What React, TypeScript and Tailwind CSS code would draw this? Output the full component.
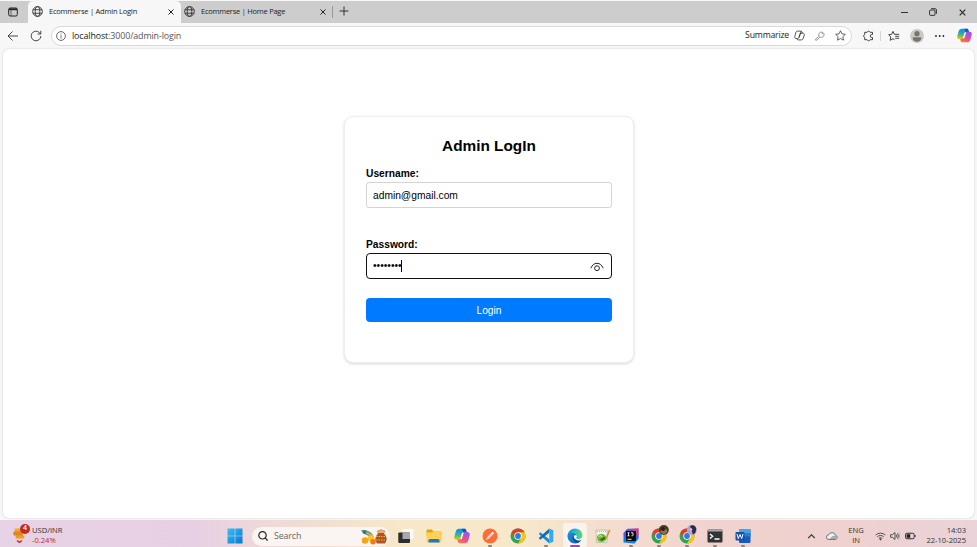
import React from "react";

const ui = "font-['Open_Sans','Noto_Sans',sans-serif]";

function Globe() {
  return (
    <svg viewBox="0 0 12 12" className="h-[11px] w-[11px] shrink-0" fill="none" stroke="#333" strokeWidth="1">
      <circle cx="6" cy="6" r="5.3" />
      <ellipse cx="6" cy="6" rx="2.5" ry="5.3" />
      <path d="M1.2 4.1h9.6M1.2 7.9h9.6" />
    </svg>
  );
}

function Cross({ className }: { className: string }) {
  return (
    <svg viewBox="0 0 8 8" className={className} fill="none" stroke="#222" strokeWidth="1">
      <path d="M1.500 1.500l5 5M6.500 1.500l-5 5" />
    </svg>
  );
}

function CopilotMark({ className }: { className: string }) {
  return (
    <svg viewBox="0 0 16 16" className={className}>
      <defs>
        <linearGradient id="cpA" x1="0.4" y1="0" x2="0.3" y2="1">
          <stop offset="0" stopColor="#168ce5" />
          <stop offset="0.35" stopColor="#17a6c9" />
          <stop offset="0.65" stopColor="#63bb60" />
          <stop offset="1" stopColor="#f5c514" />
        </linearGradient>
        <linearGradient id="cpB" x1="0.7" y1="0" x2="0.2" y2="1">
          <stop offset="0" stopColor="#8e57ef" />
          <stop offset="0.5" stopColor="#e54b9d" />
          <stop offset="1" stopColor="#fb7748" />
        </linearGradient>
      </defs>
      <path d="M5 .8h5.300c1 0 1.500.5 1.800 1.400l.6 2.200H10.400c-1 0-1.500.5-1.800 1.500L7.200 10c-.4 1.400-.9 2-2 2H2.800C.6 12-.2 10.400.5 8l1.200-4.200C2.300 1.800 3.300.8 5 .8z" fill="url(#cpA)" />
      <path d="M8 .8h2.300c1 0 1.500.5 1.800 1.400l.6 2.200H9.200z" fill="#1753c8" />
      <path d="M11 15.200H5.700c-1 0-1.500-.5-1.800-1.400l-.6-2.200h2.300c1 0 1.500-.5 1.800-1.500L8.800 6c.4-1.400.9-2 2-2h2.400c2.200 0 3 1.600 2.300 4l-1.200 4.200c-.6 2-1.600 3-3.300 3z" fill="url(#cpB)" />
      <path d="M6.300 10.600L8 5Q8.500 4 9.700 4.700L8 10.400q-.5 1.200-1.700.2z" fill="#fff" />
    </svg>
  );
}

function TabStrip() {
  return (
    <div className="flex h-[22px] items-stretch bg-[#cdcdcd]">
      <div className="flex w-[28px] items-center pb-px pl-[8px]">
        <svg viewBox="0 0 10 10" className="h-[10px] w-[10px]" fill="none" stroke="#222">
          <rect x="0.700" y="1" width="8.600" height="8" rx="1.400" />
          <path d="M1 2.300h8" strokeWidth="1.800" />
          <path d="M3 3v6" strokeWidth="0.600" />
        </svg>
      </div>
      <div className="flex w-[153px] items-center rounded-t-[5px] bg-[#f7f7f7] pb-px pl-[4px]">
        <Globe />
        <span className="ml-[6px] w-[118px] whitespace-nowrap text-[7.500px] tracking-[-0.220px] text-[#222]">Ecommerse | Admin LogIn</span>
        <Cross className="h-[8px] w-[8px]" />
      </div>
      <div className="flex w-[151px] items-center pb-px pl-[3px]">
        <Globe />
        <span className="ml-[6px] w-[118px] whitespace-nowrap text-[7.500px] tracking-[-0.250px] text-[#222]">Ecommerse | Home Page</span>
        <Cross className="h-[8px] w-[8px]" />
      </div>
      <div className="my-[5px] w-px bg-[#999]" />
      <svg viewBox="0 0 10 10" className="mt-[5px] ml-[6px] h-[10px] w-[10px]" fill="none" stroke="#333" strokeWidth="1">
        <path d="M5 .5v9M.5 5h9" />
      </svg>
      <div className="ml-auto flex w-[76px] items-center justify-between pr-[10px]">
        <div className="h-px w-[7px] bg-[#333]" />
        <svg viewBox="0 0 8 8" className="h-[8px] w-[8px]" fill="none" stroke="#333" strokeWidth="1">
          <rect x="0.600" y="2" width="5.400" height="5.400" rx="1" />
          <path d="M2.200 .7h4c.8 0 1.200.5 1.200 1.200v3.900" />
        </svg>
        <Cross className="h-[9px] w-[9px]" />
      </div>
    </div>
  );
}

function Toolbar() {
  return (
    <div className="flex h-[25px] items-center bg-[#f7f7f7]">
      <svg viewBox="0 0 12 12" className="ml-[7px] h-[12px] w-[12px]" fill="none" stroke="#333" strokeWidth="0.900">
        <path d="M11 6H1M5.500 1.500L1 6l4.500 4.500" />
      </svg>
      <svg viewBox="0 0 12 12" className="ml-[11px] h-[12px] w-[12px]" fill="none" stroke="#333" strokeWidth="0.900">
        <path d="M10.800 6a4.800 4.800 0 1 1-1.300-3.300L10.700 4M10.800.8V4H7.600" />
      </svg>
      <div className="ml-[9px] flex h-[20px] w-[801px] items-center rounded-full border border-[#d9d9d9] bg-white pl-[4px]">
        <svg viewBox="0 0 10 10" className="h-[10px] w-[10px]" fill="none" stroke="#444" strokeWidth="0.800">
          <circle cx="5" cy="5" r="4.400" />
          <path d="M5 4.400v3M5 2.500v1" />
        </svg>
        <span className="ml-[6px] text-[8.900px] tracking-[-0.120px] text-[#555]"><span className="text-[#222]">localhost</span>:3000/admin-login</span>
        <span className="ml-auto pt-px text-[8.700px] tracking-[-0.200px] text-[#222]">Summarize</span>
        <svg viewBox="0 0 12 12" className="ml-[5px] h-[11px] w-[11px]" fill="none" stroke="#333" strokeWidth="0.900" strokeLinejoin="round">
          <path d="M3.900 1.200h3.500c.8 0 1.100.4 1.300 1l.4 1.300H7.600c-.8 0-1.100.4-1.300 1.200L5.300 8c-.3 1-.7 1.300-1.400 1.300H2.200C1 9.300.5 8.300.9 7l1-3.800c.4-1.400.9-2 2-2z" />
          <path d="M8.100 10.800H4.600c-.8 0-1.100-.4-1.300-1l-.2-.5M9.100 3.500h.7c1.200 0 1.700 1 1.300 2.200l-1 3.100c-.4 1.400-.9 2-2 2M7.800 1.300L5.700 8.200" />
        </svg>
        <svg viewBox="0 0 12 12" className="ml-[10px] h-[10px] w-[10px]" fill="none" stroke="#777" strokeWidth="0.900">
          <path d="M5 6.200A3.200 3.200 0 1 1 6.600 7.500H5.700L2.300 11H.7V9.800z" />
          <circle cx="8.700" cy="3.200" r=".4" />
        </svg>
        <svg viewBox="0 0 12 12" className="mr-[5px] ml-[10px] h-[11px] w-[11px]" fill="none" stroke="#444" strokeWidth="0.900" strokeLinejoin="round">
          <path d="M6 .8l1.600 3.400 3.700.5-2.700 2.600.7 3.800L6 9.300l-3.300 1.800.7-3.800L.7 4.700l3.700-.5z" />
        </svg>
      </div>
      <svg viewBox="0 0 12 12" className="ml-[10px] h-[12px] w-[12px]" fill="none" stroke="#333" strokeWidth="0.900" strokeLinejoin="round">
        <path d="M10.500 4.500V2.300H8.100a1.600 1.600 0 0 0-3 0H2.700v2.200a1.600 1.600 0 0 0 0 3v2.200h2.400a1.600 1.600 0 0 0 3 0h2.400V7.500H9.800a1.500 1.500 0 0 1 0-3z" />
      </svg>
      <div className="ml-[6px] h-[10px] w-px bg-[#d5d5d5]" />
      <svg viewBox="0 0 12 12" className="ml-[7px] h-[12px] w-[12px]" fill="none" stroke="#333" strokeWidth="0.900" strokeLinejoin="round">
        <path d="M6.500 9.600L5 8.700l-2.800 1.600.6-3.300L.7 4.700l3-.4L5 1.400l1.300 2.900h4.900M7.200 6.300h4M7.200 8.300h4" />
      </svg>
      <svg viewBox="0 0 14 14" className="ml-[10px] h-[14px] w-[14px]">
        <circle cx="7" cy="7" r="7" fill="#cbc8c5" />
        <circle cx="7" cy="4.700" r="2.600" fill="#77736f" />
        <path d="M2.800 8.300h8.400v1.300C11.200 11.700 9.300 12.700 7 12.700S2.800 11.700 2.800 9.600z" fill="#77736f" />
      </svg>
      <svg viewBox="0 0 10 4" className="ml-[11px] h-[4px] w-[10px]" fill="#222">
        <circle cx="1" cy="2" r=".9" />
        <circle cx="4.700" cy="2" r=".9" />
        <circle cx="8.400" cy="2" r=".9" />
      </svg>
      <CopilotMark className="ml-[12px] h-[15px] w-[15px]" />
    </div>
  );
}

function LoginCard() {
  return (
    <div className="flex h-[247px] w-[290px] flex-col rounded-[9px] border border-[#eee] bg-white px-[21px] pt-[19px] font-['Liberation_Sans',sans-serif] text-[10.240px] text-black shadow-[0_1px_3px_rgba(0,0,0,0.16)]">
      <h2 className="text-center text-[15.360px] leading-[19px] font-bold">Admin LogIn</h2>
      <label className="mt-[13px] leading-[12px] font-bold">Username:</label>
      <div className="mt-[2px] flex h-[26px] w-[246px] items-center rounded-[3px] border border-[#d4d4d4] pt-px pl-[6px]">admin@gmail.com</div>
      <label className="mt-[31px] leading-[12px] font-bold">Password:</label>
      <div className="mt-[2px] flex h-[26px] w-[246px] items-center rounded-[4px] border-[1.500px] border-[#111] pr-[7px] pl-[6px]">
        <span>••••••••</span>
        <i className="-ml-px h-[12px] w-px bg-black" />
        <svg viewBox="0 0 14 10" className="mt-px ml-auto h-[10px] w-[14px]" fill="none" stroke="#222" strokeWidth="1">
          <path d="M.8 6.200C2.200 3 4.300 1.300 7 1.300S11.800 3 13.200 6.200" />
          <circle cx="7" cy="6.200" r="2.400" />
        </svg>
      </div>
      <div className="mt-[19px] flex h-[24px] w-[246px] items-center justify-center rounded-[4px] bg-[#007bff] pt-px text-white">Login</div>
    </div>
  );
}

function AppSlot({ children, running = false, active = false }: { children: React.ReactNode; running?: boolean; active?: boolean }) {
  return (
    <div className="flex h-[27px] w-[28.080px] items-end justify-center">
      <div className={active ? "flex h-[24px] w-[24px] flex-col items-center justify-between rounded-[3px] bg-white/60 pt-[5px]" : "flex h-[24px] w-[24px] flex-col items-center justify-between pt-[5px]"}>
        {children}
        {running && <i className={active ? "h-[2px] w-[10px] rounded-full bg-[#a044b8]" : "h-[2px] w-[4px] rounded-full bg-[#8c8478]"} />}
      </div>
    </div>
  );
}

function Chrome({ avatar }: { avatar?: "brown" | "violet" }) {
  return (
    <svg viewBox="0 0 16 16" className="h-[16px] w-[16px] overflow-visible">
      <circle cx="8" cy="8" r="7.500" fill="#2fa44f" />
      <path d="M1.500 4.250A7.500 7.500 0 0 1 14.500 4.250H8L4.750 9.900z" fill="#e33b2e" />
      <path d="M14.500 4.250A7.500 7.500 0 0 1 8 15.500L11.250 9.900 8 4.250z" fill="#fbc116" />
      <circle cx="8" cy="8" r="3.750" fill="#fff" />
      <circle cx="8" cy="8" r="2.900" fill="#3178df" />
      {avatar === "brown" && (
        <g>
          <circle cx="12.800" cy="2" r="5" fill="#4a3a28" />
          <path d="M9 4c1-3 3-1 4-2s2-1 3.700 1c-1 2-2 3-4 3.500z" fill="#8d704b" />
          <circle cx="12" cy="1" r="1.900" fill="#282218" />
        </g>
      )}
      {avatar === "violet" && (
        <g>
          <circle cx="12.800" cy="2" r="5" fill="#aaa5d3" />
          <path d="M11 -2c3-2 6 0 6.300 3l-1 4-2.300 1.500-1-3z" fill="#30294b" />
          <circle cx="12" cy="1.500" r="1.300" fill="#e1c5d2" />
        </g>
      )}
    </svg>
  );
}

function PinnedApps() {
  const s = "h-[16px] w-[16px]";
  return (
    <div className="flex">
      <AppSlot>
        <svg viewBox="0 0 16 16" className={s}>
          <rect x="4.500" y="1" width="11" height="10" rx="1" fill="#f9f9f8" />
          <rect x=".3" y="4.500" width="11.700" height="10.500" rx="1" fill="#2d2d2d" />
          <rect x="4.500" y="4.500" width="7.500" height="6.500" fill="#a9a9a9" />
        </svg>
      </AppSlot>
      <AppSlot>
        <svg viewBox="0 0 16 16" className={s}>
          <path d="M.5 2.500Q.5 1.500 1.500 1.500H6l1.500 2h7q1 0 1 1V8H.5z" fill="#e3a411" />
          <path d="M.5 4.500h5l1.500-1h7.500q1 0 1 1v9q0 1-1 1h-13q-1 0-1-1z" fill="#ffd15b" />
          <path d="M2.500 14.500v-2q0-1.500 1.500-1.500h8q1.500 0 1.500 1.500v2z" fill="#1979ca" />
        </svg>
      </AppSlot>
      <AppSlot><CopilotMark className={s} /></AppSlot>
      <AppSlot running>
        <svg viewBox="0 0 16 16" className={s}>
          <circle cx="8" cy="8" r="7.500" fill="#ff6c37" />
          <path d="M4 12l1.300-3 5-5q1.500-.3 1.700 1.500l-5 5z" fill="#fff1e9" />
          <path d="M5.500 10.800l5-5" stroke="#ff6c37" strokeWidth=".5" />
        </svg>
      </AppSlot>
      <AppSlot><Chrome /></AppSlot>
      <AppSlot running>
        <svg viewBox="0 0 16 16" className={s}>
          <path d="M2.200 4.300L11.500 11.500 11.300 15.400.8 6z" fill="#168bd0" />
          <path d="M11.300.6L.8 10l1.400 1.700 9.300-7.200z" fill="#0870b7" />
          <path d="M11.300.6l4 1.700v11.400l-4 1.700z" fill="#35a9ec" />
        </svg>
      </AppSlot>
      <AppSlot running active>
        <svg viewBox="0 0 16 16" className={s}>
          <defs>
            <linearGradient id="edgeTop"><stop stopColor="#168bd5" /><stop offset=".55" stopColor="#27bad1" /><stop offset="1" stopColor="#69dc57" /></linearGradient>
            <linearGradient id="edgeBase" y2="1"><stop stopColor="#1c8ee0" /><stop offset="1" stopColor="#1266bd" /></linearGradient>
          </defs>
          <path d="M.5 8C.5 5.500 3 4 5.500 4.300 8.500 4.500 10 6.500 9.300 8.300 8.300 10 10 11.800 14.300 11.700 13 14 10.700 15.500 8 15.500 3.800 15.500.5 12.200.5 8z" fill="url(#edgeBase)" />
          <path d="M6.500 7C4.500 9 5.800 14 10.300 15.100 12 14.500 13.600 13.200 14.500 11.400 10 13 6 10.500 6.500 7z" fill="#0c4f9a" />
          <path d="M.5 7.700C1 3.400 4.200.5 8 .5c4.300 0 7.500 3.200 7.500 6.700 0 2.500-1.900 3.900-4.200 3.900-2 0-2.700-.8-2-1.700C10.700 6.400 7.900 4.300 5.200 4.500 2.800 4.700 1 6 .5 7.700z" fill="url(#edgeTop)" />
          <path d="M7 7.800c.5-1 2.300-.8 2.500.4 0 .7-.6 1-.5 1.600.2.900 1.600 1.300 3.300 1.200 1.200 0 2.300-.5 3-1.200v1.900c-1.500.8-3.300 1-4.900.5C8.200 11.600 6.300 9.900 7 7.800z" fill="#fff" />
        </svg>
      </AppSlot>
      <AppSlot>
        <svg viewBox="0 0 16 16" className={s}>
          <path d="M1 2h11v12.500H1.500z" fill="#f5f8ea" stroke="#a1aa99" strokeWidth=".6" />
          <path d="M2 8q4.500-4.500 9 0l.5 4q-4 3.500-9 1z" fill="#78b934" />
          <path d="M4 10.500q3 1 5-2l1.500 2-3.500 2.500z" fill="#286c25" />
          <path d="M3.500 8.500l2.500-1 1 1.500" fill="none" stroke="#d9edb4" strokeWidth=".8" />
          <path d="M2 3.500h9" stroke="#999" strokeWidth=".8" strokeDasharray="1 1" />
          <path d="M10.500 10.500l3.500-9 1.500.7-3.500 8-1.500 1.200z" fill="#d79032" />
        </svg>
      </AppSlot>
      <AppSlot running>
        <svg viewBox="0 0 16 16" className={s}>
          <path d="M4 1l11.500-.5v10l-4 5L.5 14.500V5z" fill="#087cfa" />
          <path d="M5 1l10.500-.5v9l-4-5z" fill="#e63573" />
          <path d="M.5 6L5 .8l6 .5-8 9z" fill="#7e43db" />
          <rect x="3" y="3" width="10" height="10" fill="#090909" />
          <path d="M4.500 4.800h2M5.500 4.800v3M4.500 7.800h2M8 4.800h2v2.500q0 .7-1.500.5M4.500 11.300h4" fill="none" stroke="#fff" strokeWidth=".9" />
        </svg>
      </AppSlot>
      <AppSlot running><Chrome avatar="brown" /></AppSlot>
      <AppSlot running><Chrome avatar="violet" /></AppSlot>
      <AppSlot running>
        <svg viewBox="0 0 16 16" className={s}>
          <rect x=".5" y="1.500" width="15" height="13" rx="1" fill="#333" />
          <path d="M.5 3.500v-1q0-1 1-1h13q1 0 1 1v1z" fill="#aaa" />
          <path d="M3 6l2.700 2.300L3 10.600M7.500 11h5" fill="none" stroke="#fff" strokeWidth="1.300" />
        </svg>
      </AppSlot>
      <AppSlot running>
        <svg viewBox="0 0 16 16" className={s}>
          <rect x="4" y="1" width="11.500" height="14" rx="1" fill="#185abd" />
          <path d="M4 1h10.500q1 0 1 1v3H4z" fill="#41a5ee" />
          <path d="M4 5h11.500v3.500H4z" fill="#2b7cd3" />
          <rect x=".5" y="4" width="9" height="8.500" rx="1" fill="#1850a5" />
          <path d="M2 6l1.300 4.500L5 6.500l1.700 4L8 6" fill="none" stroke="#fff" strokeWidth="1" />
        </svg>
      </AppSlot>
    </div>
  );
}

function Taskbar() {
  return (
    <div className="flex h-[27px] items-center bg-[linear-gradient(90deg,#e8d2e5_0%,#e7d0e3_20%,#efd8d8_27%,#f7e8c8_41%,#f7e8cb_53%,#f4dccf_63%,#f0d2ce_74%,#eed1d0_88%,#ead3d9_100%)]">
      <div className="flex w-[227px] items-center pl-[12px]">
        <div className="relative h-[20px] w-[17px]">
          <svg viewBox="0 0 17 20" className="h-[20px] w-[17px]">
            <path d="M3 4.500h8q1 1 0 3H3q-1-1.500 0-3z" fill="#f5a62c" />
            <path d="M1.500 8h9q1 1 0 3h-9q-1-1.500 0-3z" fill="#e58a1d" />
            <path d="M4 11.500h8q1 1 0 3H4q-1-1.500 0-3z" fill="#f39a21" />
            <path d="M2 7.700h8M2 11.200h9" stroke="#bd6812" strokeWidth=".6" />
            <path d="M5 16l2.500 1.200L10 16l.3 1.200L7.500 19.200 4.700 17.200z" fill="#c5341e" />
          </svg>
          <span className="absolute top-0 left-[8px] flex h-[10px] w-[10px] items-center justify-center rounded-full bg-[#c42b1c] text-[7px] font-semibold text-white">4</span>
        </div>
        <div className="ml-[3px] pt-[2px] text-[7.600px] leading-[10px] text-[#333]">
          <div>USD/INR</div>
          <div className="text-[#c92a22]">-0.24%</div>
        </div>
      </div>
      <svg viewBox="0 0 16 16" className="mt-[5px] h-[16px] w-[16px]">
        <defs>
          <linearGradient id="win" x2="1" y2="1"><stop stopColor="#35c4f5" /><stop offset="1" stopColor="#0874d1" /></linearGradient>
        </defs>
        <path d="M.5.500h7.200v7.200H.5zM8.300.5h7.200v7.200H8.300zM.5 8.300h7.200v7.200H.5zM8.300 8.300h7.200v7.200H8.300z" fill="url(#win)" />
      </svg>
      <div className="mt-[5px] ml-[9px] flex h-[19px] w-[138px] items-center rounded-full bg-[#faf4f2] pl-[6px]">
        <svg viewBox="0 0 10 10" className="h-[10px] w-[10px]" fill="none" stroke="#222" strokeWidth="1.200">
          <circle cx="4.500" cy="4.300" r="3.700" />
          <path d="M7.100 6.900L9.700 9.500" />
        </svg>
        <span className="ml-[6px] pt-px text-[8.800px] tracking-[-0.100px] text-[#666]">Search</span>
        <svg viewBox="0 0 28 17" className="mr-[2px] ml-auto h-[17px] w-[28px]">
          <path d="M1 2q10-1 13 7L9 8Q3 6 1 2z" fill="#799b70" />
          <path d="M3 3l10 5" stroke="#d6c879" strokeWidth="1" />
          <circle cx="4.500" cy="4" r="2" fill="#287d85" />
          <circle cx="5" cy="12.500" r="3.200" fill="#f7a414" />
          <circle cx="11" cy="10.500" r="3.300" fill="#ffc421" />
          <circle cx="13" cy="13.700" r="2.700" fill="#f27b19" />
          <path d="M17 3q4-3 8 0l-1 2.500q5 5 1 10h-8q-4-5 1-10z" fill="#b25324" />
          <path d="M17 3q4-3 8 0l-1 2h-6z" fill="#e6ad73" />
          <path d="M16 8.500h10M16 12h10" stroke="#efb33a" strokeWidth="1.200" strokeDasharray="1.500 1" />
        </svg>
      </div>
      <div className="ml-[2px] h-[27px]"><PinnedApps /></div>
      <div className="ml-auto flex h-full items-center pt-[5px]">
        <svg viewBox="0 0 8 8" className="h-[9px] w-[9px]" fill="none" stroke="#333" strokeWidth="1">
          <path d="M1 5.500l3-3 3 3" />
        </svg>
        <svg viewBox="0 0 12 10" className="ml-[10px] h-[10px] w-[12px]">
          <path d="M3 8.500a2.400 2.400 0 0 1-.2-4.800A3.600 3.600 0 0 1 9.500 4.200a2.200 2.200 0 0 1-.2 4.300z" fill="#eef1f2" stroke="#555" strokeWidth=".8" />
          <path d="M3.500 8l3-3q3-1 4 1t-2 2z" fill="#a5acb0" />
        </svg>
      </div>
      <div className="ml-[9px] w-[18px] pt-[2px] text-center text-[7.600px] leading-[10px] tracking-[-0.050px] text-[#333]">ENG<br />IN</div>
      <div className="ml-[10px] flex items-center pt-[5px]">
        <svg viewBox="0 0 12 10" className="h-[10px] w-[11px]" fill="none" stroke="#333" strokeWidth=".9">
          <path d="M.8 4a7.400 7.400 0 0 1 10.400 0M2.500 5.900a5 5 0 0 1 7 0M4.200 7.600a2.600 2.600 0 0 1 3.600 0" />
          <circle cx="6" cy="8.700" r=".6" fill="#333" />
        </svg>
        <svg viewBox="0 0 10 10" className="ml-[4px] h-[10px] w-[10px]" fill="none" stroke="#333" strokeWidth=".8">
          <path d="M.6 3.700h1.700L5 1.500v7L2.300 6.300H.6zM6.300 3.700q1 1.300 0 2.600M7.500 2.500q2 2.500 0 5" />
          <path d="M8.600 1.500q2 3.500 0 7" stroke="#999" />
        </svg>
        <svg viewBox="0 0 12 8" className="ml-[5px] h-[8px] w-[11px]">
          <rect x=".5" y="1" width="9.500" height="6" rx="1.500" fill="none" stroke="#222" />
          <rect x="1.700" y="2" width="4" height="4" fill="#222" />
          <path d="M11 3v2" stroke="#222" />
        </svg>
      </div>
      <div className="ml-[8px] w-[42px] pt-[2px] text-right text-[7.600px] leading-[10px] whitespace-nowrap text-[#333]">14:03<br />22-10-2025</div>
      <div className="w-[11px]" />
    </div>
  );
}

export default function App() {
  return (
    <div className={`${ui} flex h-[547px] w-[977px] flex-col overflow-hidden bg-[#f7f7f7] pt-px`}>
      <TabStrip />
      <Toolbar />
      <main className="mx-[3px] mt-px flex h-[469px] justify-center rounded-[6px] bg-white pt-[67px] pl-px shadow-[0_0_2px_rgba(0,0,0,0.2)]">
        <LoginCard />
      </main>
      <div className="h-[2px] shrink-0" />
      <Taskbar />
    </div>
  );
}
